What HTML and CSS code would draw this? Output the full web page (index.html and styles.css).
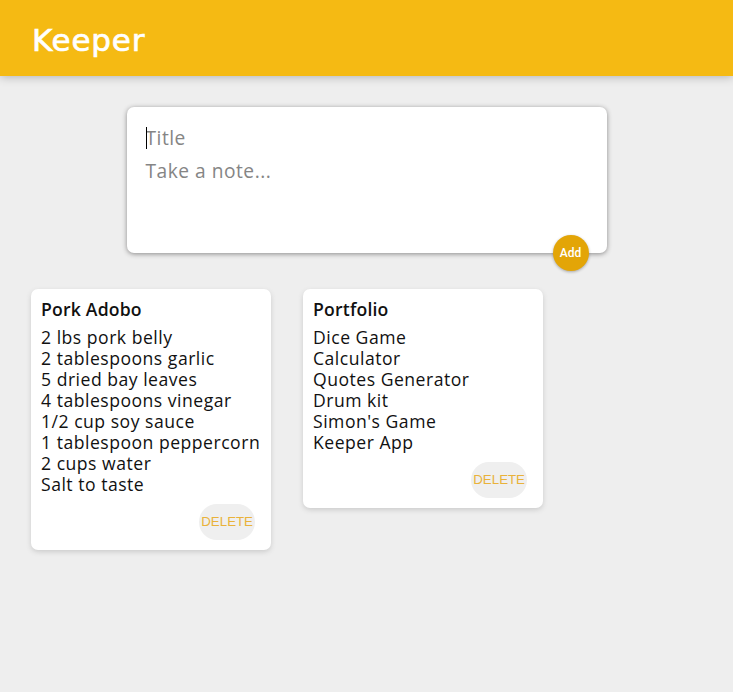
FILE: index.html
```html
<!DOCTYPE html>
<html>
<head>
<meta charset="utf-8">
<link rel="stylesheet" href="styles.css">
</head>
<body>
<header class="app-header"><h1 class="brand">Keeper</h1></header>
<form class="create-note">
  <input class="field" name="title" placeholder="Title">
  <span class="caret"></span>
  <textarea class="field area" name="content" placeholder="Take a note..." rows="3"></textarea>
  <button class="add-btn" type="button">Add</button>
</form>
<div class="notes">
  <div class="note">
    <h1 class="note-title">Pork Adobo</h1>
    <p class="note-body">2 lbs pork belly
2 tablespoons garlic
5 dried bay leaves
4 tablespoons vinegar
1/2 cup soy sauce
1 tablespoon peppercorn
2 cups water
Salt to taste</p>
    <div class="note-actions"><button class="del-btn" type="button">DELETE</button></div>
  </div>
  <div class="note">
    <h1 class="note-title">Portfolio</h1>
    <p class="note-body">Dice Game
Calculator
Quotes Generator
Drum kit
Simon's Game
Keeper App</p>
    <div class="note-actions"><button class="del-btn" type="button">DELETE</button></div>
  </div>
</div>
</body>
</html>
```
FILE: styles.css
```css
* { margin: 0; padding: 0; box-sizing: border-box; }
html { font-family: "Open Sans", "DejaVu Sans", sans-serif; }
body { background: #eeeeee; padding: 0 16px; min-height: 692px; }
.app-header {
  background: #f5ba13;
  margin: 0 -16px;
  height: 76px;
  padding: 0 32px;
  display: flex;
  align-items: center;
  box-shadow: 0 0 10px 0 rgba(0,0,0,0.3);
}
.brand {
  color: #fff;
  font-family: "DejaVu Sans", sans-serif;
  font-weight: 400;
  font-size: 31px;
  letter-spacing: 0.8px;
  -webkit-text-stroke: 0.7px #fff;
  margin-top: 3px;
}
.create-note {
  position: relative;
  width: 480px;
  height: 146px;
  margin: 31px auto 20px auto;
  background: #fff;
  padding: 15px;
  border-radius: 7px;
  box-shadow: 0 1px 5px rgb(138,137,137);
}
.caret {
  position: absolute;
  left: 19px;
  top: 20px;
  width: 1px;
  height: 22px;
  background: #000;
}
.field {
  display: block;
  width: 100%;
  border: none;
  outline: none;
  padding: 4px;
  font-family: inherit;
  font-size: 19.2px;
  letter-spacing: 0.5px;
  height: 31px;
  resize: none;
  color: #333;
}
.area { height: 80px; }
.field::placeholder { color: #858585; }
.add-btn {
  position: absolute;
  right: 18px;
  bottom: -18px;
  width: 36px;
  height: 36px;
  border-radius: 50%;
  border: none;
  background: #e3a507;
  color: #fff;
  font-family: "Roboto", sans-serif;
  font-weight: 500;
  font-size: 12px;
  box-shadow: 0 1px 3px rgba(0,0,0,0.3);
}
.notes { display: flex; align-items: flex-start; }
.note {
  background: #fff;
  border-radius: 7px;
  box-shadow: 0 2px 5px #ccc;
  padding: 10px;
  width: 240px;
  margin: 16px 16px 16px 15px;
}
.note + .note { margin-left: 16px; }
.note-title {
  font-size: 17.6px;
  font-weight: 600;
  line-height: 21.5px;
  margin-bottom: 6px;
  color: #111;
  letter-spacing: 0.2px;
}
.note-body {
  font-size: 17.6px;
  line-height: 21px;
  letter-spacing: 0.5px;
  white-space: pre-wrap;
  margin-bottom: 9px;
  color: #111;
}
.note-actions { display: flex; justify-content: flex-end; padding-right: 6px; }
.del-btn {
  height: 36px;
  padding: 0 2px;
  min-width: 36px;
  border: none;
  border-radius: 18px;
  background: #efefef;
  color: #e9b23a;
  font-family: "Liberation Sans", Arial, sans-serif;
  font-size: 13.3px;
}
```
